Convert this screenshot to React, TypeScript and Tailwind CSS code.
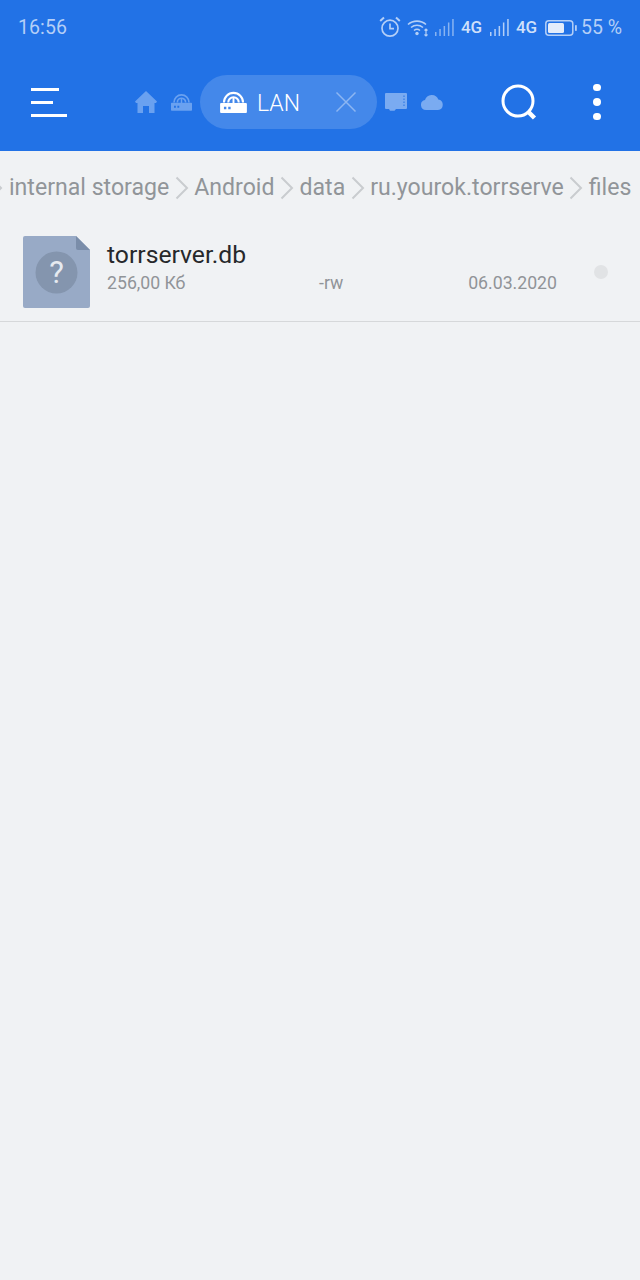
import React from "react";

function Router({ className }: { className: string }) {
  return (
    <svg viewBox="0 0 28 23" className={className} fill="none">
      <path d="M4 12a10 10 0 0 1 20 0" stroke="currentColor" strokeWidth="2.200" />
      <path d="M8.500 12a5.500 5.500 0 0 1 11 0" stroke="currentColor" strokeWidth="2.200" />
      <rect x="13" y="7" width="2" height="7" fill="currentColor" />
      <path fillRule="evenodd" clipRule="evenodd" d="M1 12.500h26a1 1 0 0 1 1 1V22a1 1 0 0 1-1 1H1a1 1 0 0 1-1-1v-8.500a1 1 0 0 1 1-1ZM4 16.500v2.500h2.500v-2.500H4Zm4.500 0v2.500H11v-2.500H8.500Z" fill="currentColor" />
    </svg>
  );
}

function Signal() {
  return (
    <svg viewBox="0 0 19 17" className="w-[19px] h-[17px]" fill="currentColor">
      <rect x="0" y="13" width="1.5" height="4" />
      <rect x="4.300" y="10" width="1.500" height="7" />
      <rect x="8.600" y="7" width="1.500" height="10" />
      <rect x="12.900" y="3.500" width="1.500" height="13.500" />
      <rect x="17.200" y="0" width="1.500" height="17" />
    </svg>
  );
}

function Chevron() {
  return (
    <svg viewBox="0 0 14 24" className="w-[14px] h-[24px] shrink-0" fill="none">
      <path d="M1.500 1.500 12 12 1.500 22.500" stroke="#c9cccf" strokeWidth="2" />
    </svg>
  );
}

export default function App() {
  return (
    <div className="w-[640px] h-[1280px] bg-[#f0f2f4] overflow-hidden font-['Roboto',sans-serif]">
      <header className="h-[151px] bg-[#2272e6] flex flex-col">
        <div className="h-[55px] flex items-center justify-between px-[18px] text-[#b4cff7]">
          <span className="text-[19.500px] leading-none tracking-[0.1px]">16:56</span>
          <div className="flex items-center">
            <svg viewBox="0 0 22 22" className="w-[22px] h-[22px] -mt-[1px]" fill="none" stroke="currentColor" strokeWidth="1.700">
              <circle cx="11" cy="12.200" r="8" />
              <path d="M11 7.500v5.200h4" />
              <path d="M1.200 5 5 1.500M20.800 5 17 1.500" strokeWidth="2" />
            </svg>
            <svg viewBox="0 0 22 18" className="w-[22px] h-[18px] ml-[6px]" fill="none" stroke="currentColor" strokeWidth="1.600">
              <path d="M1 5.500C6 1 14 1 19 5.500" />
              <path d="M4 8.500c3.500-3 8.500-3 12 0" />
              <path d="M7 11.500c1.800-1.500 4.200-1.500 6 0" />
              <circle cx="10" cy="14.500" r="1.700" fill="currentColor" stroke="none" />
              <path d="M19 10v7M17.500 11.500 19 10l1.500 1.500M17.500 15.500 19 17l1.500-1.500" strokeWidth="1.200" />
            </svg>
            <span className="ml-[6px] opacity-70"><Signal /></span>
            <span className="ml-[7px] text-[17px] font-medium leading-none w-[22px] text-[#cfe0fa]">4G</span>
            <span className="ml-[7px]"><Signal /></span>
            <span className="ml-[7px] text-[17px] font-medium leading-none w-[22px] text-[#cfe0fa]">4G</span>
            <svg viewBox="0 0 32 16" className="w-[32px] h-[16px] ml-[7px]" fill="none">
              <rect x="0.800" y="0.800" width="27" height="14.400" rx="3" stroke="currentColor" strokeWidth="1.500" />
              <rect x="3" y="3" width="16" height="10" rx="1.500" fill="#e3ecfb" />
              <rect x="30" y="5" width="1.800" height="6" rx="0.800" fill="currentColor" />
            </svg>
            <span className="ml-[4px] text-[19.500px] leading-none">55 %</span>
          </div>
        </div>

        <div className="h-[94px] flex items-center text-white">
          <div className="ml-[31px] mt-[1px] w-[37px] flex flex-col gap-[10px]">
            <div className="h-[3px] w-[28px] bg-white" />
            <div className="h-[3px] w-[22px] bg-white" />
            <div className="h-[3px] w-[36px] bg-white" />
          </div>
          <svg viewBox="0 0 22 22" className="ml-[67px] w-[22px] h-[22px] text-[#6aa1f0]" fill="currentColor">
            <path d="M11 0 22 10.500l-1 1.500h-1.500v10h-5.500v-7H8v7H2.500V12H1L0 10.500 11 0Z" />
          </svg>
          <Router className="ml-[14px] w-[21px] h-[18px] text-[#6aa1f0]" />
          <div className="ml-[8px] w-[177px] h-[54px] rounded-[27px] bg-[#4488ea] flex items-center">
            <Router className="ml-[20px] w-[27px] h-[22px] text-white" />
            <span className="ml-[10px] mt-[2px] w-[42px] text-[23px] leading-none font-light">LAN</span>
            <svg viewBox="0 0 22 22" className="ml-[36px] w-[22px] h-[22px] text-[#8db6f2]" fill="none" stroke="currentColor" strokeWidth="1.500">
              <path d="M1.500 1.500 20.500 20.500M20.500 1.500 1.500 20.500" />
            </svg>
          </div>
          <svg viewBox="0 0 22 18" className="ml-[8px] w-[22px] h-[18px] text-[#7aabf1]" fill="currentColor">
            <path d="M1 0h20a1 1 0 0 1 1 1v14a1 1 0 0 1-1 1H11l-1.500 1.800H5L4 16H1a1 1 0 0 1-1-1V1a1 1 0 0 1 1-1Z" />
            <path d="M18 2.500h2v1.500h-2zM18 5.500h2v1.500h-2zM18 8.500h2v1.500h-2zM18 11.500h2v1.500h-2z" fill="#2272e6" opacity="0.500" />
          </svg>
          <svg viewBox="0 0 22 16" className="ml-[14px] w-[22px] h-[16px] text-[#7aabf1]" fill="currentColor">
            <path d="M5 16a5 5 0 0 1-1-9.900A7 7 0 0 1 17.300 5.500 5.300 5.300 0 0 1 17 16H5Z" />
          </svg>
          <svg viewBox="0 0 37 37" className="ml-[58px] w-[37px] h-[37px]" fill="none" stroke="currentColor">
            <circle cx="17" cy="17" r="15" strokeWidth="3" />
            <path d="M27 27.500l6.500 6.500" strokeWidth="4.500" />
          </svg>
          <div className="ml-[55px] flex flex-col gap-[7px]">
            <div className="w-[7.500px] h-[7.500px] rounded-full bg-white" />
            <div className="w-[7.500px] h-[7.500px] rounded-full bg-white" />
            <div className="w-[7.500px] h-[7.500px] rounded-full bg-white" />
          </div>
        </div>
      </header>

      <nav className="mt-[1px] h-[72px] -ml-[11px] flex items-center text-[#919599] text-[23.100px] leading-none whitespace-nowrap">
        <Chevron />
        <span className="ml-[6px]">internal storage</span>
        <span className="ml-[6px]"><Chevron /></span>
        <span className="ml-[5px]">Android</span>
        <span className="ml-[5px]"><Chevron /></span>
        <span className="ml-[6px]">data</span>
        <span className="ml-[6px]"><Chevron /></span>
        <span className="ml-[5px]">ru.yourok.torrserve</span>
        <span className="ml-[5px]"><Chevron /></span>
        <span className="ml-[6px]">files</span>
      </nav>

      <div className="h-[98px] border-b border-[#d6d8da] flex pl-[23px] pt-[12px]">
        <div className="relative w-[67px] h-[72px] shrink-0 flex items-center justify-center">
          <svg viewBox="0 0 67 72" className="absolute inset-0 w-[67px] h-[72px]">
            <path d="M2 0h51l14 14v56a2 2 0 0 1-2 2H2a2 2 0 0 1-2-2V2a2 2 0 0 1 2-2Z" fill="#98aac6" />
            <path d="M53 0l14 14H55a2 2 0 0 1-2-2V0Z" fill="#7a8da9" />
            <circle cx="33.500" cy="36.500" r="21" fill="#8495ae" />
          </svg>
          <span className="relative text-[#e6eaf0] text-[31px] leading-none">?</span>
        </div>
        <div className="ml-[17px] w-[450px]">
          <div className="mt-[5px] text-[#26282b] text-[24.700px] leading-[28px]">torrserver.db</div>
          <div className="mt-[2px] grid grid-cols-[212px_1fr_auto] text-[17.700px] leading-[24px] text-[#909498]">
            <span>256,00 Кб</span>
            <span>-rw</span>
            <span>06.03.2020</span>
          </div>
        </div>
        <div className="ml-[37px] mt-[29px] w-[14px] h-[14px] rounded-full bg-[#e1e3e5]" />
      </div>
    </div>
  );
}
